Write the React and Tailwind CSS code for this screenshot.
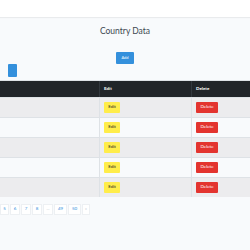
import React from 'react';

const rows = [1, 2, 3, 4, 5];
const pages = [
  { label: '5', w: 'w-[9px]' },
  { label: '6', w: 'w-[10px]' },
  { label: '7', w: 'w-[10px]' },
  { label: '8', w: 'w-[10px]' },
  { label: '...', w: 'w-[10px]', muted: true },
  { label: '49', w: 'w-[13px]' },
  { label: '50', w: 'w-[13px]' },
  { label: '»', w: 'w-[8px]', muted: true },
];

const App = () => {
  return (
    <div className="min-h-screen bg-[#f8fafc] font-['Lato','Liberation_Sans',sans-serif] text-[#212529] overflow-hidden">
      {/* navbar */}
      <div className="h-[17px] bg-white shadow-[0_1px_1px_rgba(0,0,0,0.06)]"></div>

      <div className="pt-[9px] text-center text-[8.5px] leading-[11px] text-[#3d4852]">Country Data</div>

      <div className="flex justify-center pt-[15px]">
        <button className="w-[18px] h-[12px] rounded-[1px] bg-[#3490dc] text-white text-[4px] leading-none">Add</button>
      </div>

      <div className="pl-[8px]">
        <div className="w-[9px] h-[13px] rounded-[1px] bg-[#3490dc]"></div>
      </div>

      {/* table */}
      <div className="mt-[3px] border-t border-[#dee2e6]">
        <div className="grid grid-cols-[100px_92px_1fr] h-[16px] bg-[#212529] text-white text-[4.5px] font-bold items-center">
          <div className="h-full border-r border-[#32383e]"></div>
          <div className="h-full flex items-center pl-[4px] border-r border-[#32383e]">Edit</div>
          <div className="pl-[4px]">Delete</div>
        </div>
        {rows.map((r, i) => (
          <div
            key={r}
            className={`grid grid-cols-[100px_92px_1fr] h-[20px] border-t border-[#dee2e6] ${i % 2 === 0 ? 'bg-[#ececee]' : 'bg-[#f8fafc]'}`}
          >
            <div className="border-r border-[#dee2e6]"></div>
            <div className="flex items-center pl-[4px] border-r border-[#dee2e6]">
              <button className="w-[16px] h-[11px] rounded-[1px] bg-[#ffed4a] text-[#212529] text-[4.5px] leading-none">Edit</button>
            </div>
            <div className="flex items-center pl-[4px]">
              <button className="w-[22px] h-[11px] rounded-[1px] bg-[#e3342f] text-white text-[4.5px] leading-none">Delete</button>
            </div>
          </div>
        ))}
      </div>

      {/* pagination */}
      <div className="flex gap-[1px] mt-[7px]">
        {pages.map((p) => (
          <div
            key={p.label}
            className={`${p.w} h-[11px] flex items-center justify-center bg-white border border-[#edf0f3] text-[4.5px] ${p.muted ? 'text-[#b8c2cc]' : 'text-[#3490dc]'}`}
          >
            {p.label}
          </div>
        ))}
      </div>
    </div>
  );
};

export default App;
